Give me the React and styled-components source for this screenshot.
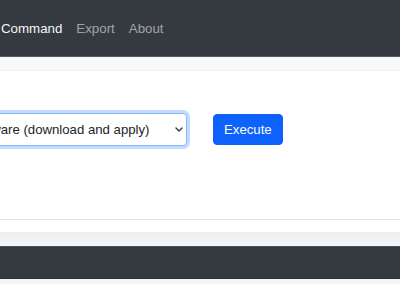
import React from "react";
import styled, { createGlobalStyle } from "styled-components";

const Global = createGlobalStyle`
  html, body { margin: 0; padding: 0; overflow: hidden; }
  body {
    background: #f6f8fa;
    font-family: "Liberation Sans", Arial, sans-serif;
    font-size: 13.2px;
    width: 400px;
    height: 284px;
  }
`;

const Navbar = styled.nav`
  box-sizing: border-box;
  height: 57px;
  background: #343a40;
  border-bottom: 1px solid #565c62;
  display: flex;
  align-items: center;
  gap: 14px;
  padding: 1px 0 0 1px;
`;

const NavLink = styled.a`
  font-size: 13.3px;
  text-decoration: none;
  color: ${(p) => (p.$active ? "#f4f6f8" : "rgba(255,255,255,0.55)")};
  cursor: pointer;
`;

const Main = styled.main`
  padding-top: 13px;
`;

const Card = styled.section`
  background: #fff;
  border-top: 1px solid #eceff1;
  margin: 0 -2px;
`;

const CardBody = styled.div`
  padding: 42px 0 73px;
  border-bottom: 1px solid #e1e4e7;
`;

const CardFooter = styled.div`
  height: 12px;
`;

const FormRow = styled.div`
  display: flex;
  align-items: center;
  gap: 26px;
  margin-left: -88px;
`;

const SelectWrap = styled.div`
  position: relative;
  width: 277px;
`;

const Select = styled.select`
  appearance: none;
  box-sizing: border-box;
  width: 100%;
  height: 33px;
  font-family: "Liberation Sans", Arial, sans-serif;
  font-size: 13.2px;
  line-height: 21px;
  color: #212529;
  background: #fff;
  padding: 5px 24px 5px 12px;
  border: 1px solid #86b7fe;
  border-radius: 4px;
  outline: none;
  box-shadow: 0 0 0 3px rgba(13, 110, 253, 0.25);
`;

const Chevron = styled.svg`
  position: absolute;
  right: 4px;
  top: 14px;
  width: 8px;
  height: 5px;
  pointer-events: none;
`;

const Button = styled.button`
  box-sizing: border-box;
  height: 31px;
  padding: 0 10px;
  font-family: "Liberation Sans", Arial, sans-serif;
  font-size: 13.2px;
  color: #fff;
  background: #0d62fd;
  border: 1px solid #0d62fd;
  border-radius: 4px;
  cursor: pointer;
`;

const Shade = styled.div`
  height: 14px;
  background: linear-gradient(#ededed 0, #eff2f4 35%, #f2f6f8 100%);
`;

const FooterBar = styled.footer`
  box-sizing: border-box;
  height: 33px;
  background: #343a40;
  border-top: 1px solid #4b5157;
  border-bottom: 1px solid #2c3136;
`;

const Below = styled.div`
  height: 10px;
  background: #f3f6f8;
`;

export default function App() {
  return (
    <>
      <Global />
      <Navbar>
        <NavLink $active>Command</NavLink>
        <NavLink>Export</NavLink>
        <NavLink>About</NavLink>
      </Navbar>
      <Main>
        <Card>
          <CardBody>
            <FormRow>
              <SelectWrap>
                <Select defaultValue="fw">
                  <option value="fw">Update firmware (download and apply)</option>
                </Select>
                <Chevron viewBox="0 0 8 5">
                  <path d="M1 1l3 3 3-3" fill="none" stroke="#343a40" strokeWidth="1.4" strokeLinecap="round" strokeLinejoin="round" />
                </Chevron>
              </SelectWrap>
              <Button>Execute</Button>
            </FormRow>
          </CardBody>
          <CardFooter />
        </Card>
        <Shade />
        <FooterBar />
        <Below />
      </Main>
    </>
  );
}
